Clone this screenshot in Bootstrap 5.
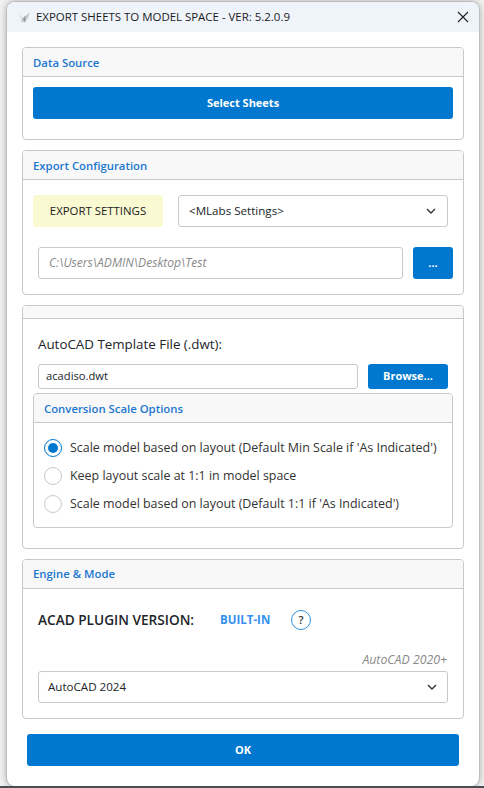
<!DOCTYPE html>
<html lang="en">
<head>
<meta charset="utf-8">
<title>Export Sheets to Model Space</title>
<link rel="stylesheet" href="https://cdn.jsdelivr.net/npm/bootstrap@5.3.0/dist/css/bootstrap.min.css">
<style>
html,body{height:100%;}
body{background:#f1f1f1;font-family:"Open Sans","Noto Sans",sans-serif;font-size:12.4px;color:#212529;overflow:hidden;}
.win{width:472px;height:784px;margin:2px 0 0 7px;background:#fff;border-radius:8px;overflow:hidden;box-shadow:0 0 0 1px #bdbdbd,0 0 6px 1px rgba(0,0,0,.28);}
.edge{height:2px;background:#4a4d52;}
.tbar{height:30px;background:#eff3fa;padding:0 9px 0 10px;font-size:11.45px;color:#1a1a1a;}
.crane{width:13px;height:11px;margin-right:6px;}
.closex{width:14px;height:14px;}
.stack{padding:15px 15px 0;}
.pane{border:1px solid #c8c8c8;border-radius:4px;background:#fff;}
.pane-h{background:#f8f8f8;border-bottom:1px solid #c8c8c8;color:#1b76cf;font-weight:600;font-size:11.35px;padding:2px 10px 0;height:29px;display:flex;align-items:center;border-radius:3px 3px 0 0;}
.pane-h.empty{height:13px;}
.pane-a{height:93px;margin-bottom:10px;}
.pane-b{height:145px;margin-bottom:10px;}
.pane-c{height:244px;margin-bottom:10px;}
.pane-d{height:160px;}
.pane-d .pane-h{padding-top:0;}
.pane-in{height:135px;margin:4px 10px 0;}
.blue{background:#0078d0;color:#fff;font-weight:700;font-size:11px;border-radius:3px;border:0;display:flex;align-items:center;justify-content:center;flex-shrink:0;}
.sel-sheets{height:32px;margin:10px 10px 0;}
.row-a{margin:15px 15px 0 10px;gap:15px;}
.tag{background:#f9f9d2;border-radius:3px;width:130px;height:32px;font-size:11.4px;color:#222;}
.fld{border:1px solid #c8c8c8;border-radius:3px;background:#fff;display:flex;align-items:center;font-size:11.6px;height:32px;padding:0 10px;}
.row-b{margin:20px 10px 0 15px;gap:10px;}
.btn-dots{width:40px;height:32px;}
.hint{color:#8a8a8a;font-style:italic;font-size:12.1px;}
.path{padding:0 10px;}
.chev{width:12px;height:8px;}
.lbl{padding:16px 15px 0;font-size:13.35px;line-height:19px;}
.row-c{margin:10px 15px 0;gap:10px;}
.fld-s{height:25px;padding:0 7px;font-size:11.2px;}
.btn-browse{width:80px;height:25px;}
.radios{padding:11px 10px;}
.rad{width:18px;height:18px;border-radius:50%;border:1px solid #c8c8c8;flex:none;background:#fff;}
.rad.on{border:1.5px solid #0078d0;display:flex;align-items:center;justify-content:center;}
.rad.on i{display:block;width:10px;height:10px;border-radius:50%;background:#0078d0;}
.rrow{height:28px;display:flex;align-items:center;gap:8px;font-size:12.45px;color:#333;white-space:nowrap;}
.row-d{margin:19px 15px 0;height:24px;}
.plug{font-size:13.65px;font-weight:600;width:182px;}
.built{color:#3390f0;font-weight:700;font-size:11.5px;width:71px;}
.q{width:20px;height:20px;border-radius:50%;border:1.5px solid #2a8fd8;font-size:11px;font-weight:600;color:#333;}
.ver{margin:19px 16px 0 15px;font-size:12.3px;line-height:18px;}
.fld-v{margin:2px 15px 0;padding:0 9px;}
.ok{height:32px;margin:15px 5px 0;}
</style>
</head>
<body>
<div class="win">
  <div class="tbar d-flex align-items-center">
    <svg class="crane flex-shrink-0" viewBox="0 0 13 11"><path d="M0.5 1.5 6 6.5 8 4 12.8 0.8 10.5 6.5 8 10.5 4 9.5 5 7Z" fill="#c3c6ca"/><path d="M6 6.5 8 4 8.6 7 7.5 10.3" fill="#94989e"/></svg>
    <span class="flex-grow-1">EXPORT SHEETS TO MODEL SPACE - VER: 5.2.0.9</span>
    <svg class="closex" viewBox="0 0 14 14"><path d="M2 2 12 12M12 2 2 12" stroke="#222" stroke-width="1.1" fill="none"/></svg>
  </div>
  <div class="stack d-flex flex-column">
    <section class="pane pane-a">
      <div class="pane-h">Data Source</div>
      <div class="blue sel-sheets">Select Sheets</div>
    </section>
    <section class="pane pane-b">
      <div class="pane-h">Export Configuration</div>
      <div class="d-flex align-items-center row-a">
        <div class="tag d-flex align-items-center justify-content-center">EXPORT SETTINGS</div>
        <div class="fld flex-grow-1 justify-content-between"><span>&lt;MLabs Settings&gt;</span><svg class="chev" viewBox="0 0 12 8"><path d="M2 2 6 6 10 2" stroke="#333" stroke-width="1.4" fill="none"/></svg></div>
      </div>
      <div class="d-flex align-items-center row-b">
        <div class="fld hint path flex-grow-1">C:\Users\ADMIN\Desktop\Test</div>
        <div class="blue btn-dots">...</div>
      </div>
    </section>
    <section class="pane pane-c">
      <div class="pane-h empty"></div>
      <div class="lbl">AutoCAD Template File (.dwt):</div>
      <div class="d-flex row-c">
        <div class="fld fld-s flex-grow-1">acadiso.dwt</div>
        <div class="blue btn-browse">Browse...</div>
      </div>
      <div class="pane pane-in">
        <div class="pane-h">Conversion Scale Options</div>
        <div class="radios">
          <div class="rrow"><span class="rad on"><i></i></span>Scale model based on layout (Default Min Scale if 'As Indicated')</div>
          <div class="rrow"><span class="rad"></span>Keep layout scale at 1:1 in model space</div>
          <div class="rrow"><span class="rad"></span>Scale model based on layout (Default 1:1 if 'As Indicated')</div>
        </div>
      </div>
    </section>
    <section class="pane pane-d">
      <div class="pane-h">Engine &amp; Mode</div>
      <div class="d-flex align-items-center row-d">
        <strong class="plug">ACAD PLUGIN VERSION:</strong>
        <span class="built">BUILT-IN</span>
        <span class="q d-flex align-items-center justify-content-center">?</span>
      </div>
      <div class="hint ver text-end">AutoCAD 2020+</div>
      <div class="fld fld-v justify-content-between"><span>AutoCAD 2024</span><svg class="chev" viewBox="0 0 12 8"><path d="M2 2 6 6 10 2" stroke="#333" stroke-width="1.4" fill="none"/></svg></div>
    </section>
    <div class="blue ok">OK</div>
  </div>
</div>
<div class="edge"></div>
<script src="https://cdn.jsdelivr.net/npm/bootstrap@5.3.0/dist/js/bootstrap.bundle.min.js"></script>
</body>
</html>
